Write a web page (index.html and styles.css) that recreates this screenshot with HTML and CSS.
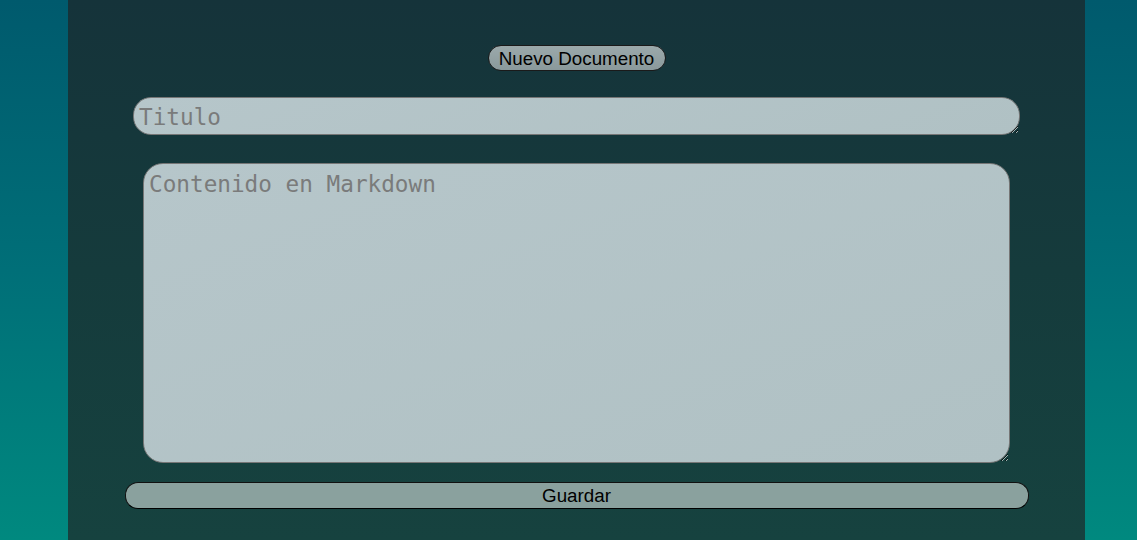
FILE: index.html
```html
<!DOCTYPE html>
<html lang="es">
<head>
<meta charset="utf-8">
<title>Nuevo Documento</title>
<link rel="stylesheet" href="styles.css">
</head>
<body>
<div class="page">
  <main class="panel">
    <button class="new-btn" type="button">Nuevo Documento</button>
    <textarea class="title-input" placeholder="Titulo"></textarea>
    <textarea class="content-input" placeholder="Contenido en Markdown"></textarea>
    <button class="save-btn" type="button">Guardar</button>
  </main>
</div>
</body>
</html>
```

FILE: styles.css
```css
html, body {
  margin: 0;
  height: 100%;
}

body {
  background: linear-gradient(180deg, #005a6d 0%, #006f78 50%, #00897f 100%);
  font-family: "Liberation Sans", Arial, sans-serif;
  overflow: hidden;
}

.page {
  display: flex;
  height: 540px;
  padding-left: 68px;
}

.panel {
  width: 1017px;
  height: 540px;
  box-sizing: border-box;
  background: linear-gradient(180deg, #15333a 0%, #153b3c 50%, #16423f 100%);
  display: flex;
  flex-direction: column;
  align-items: center;
  padding-top: 45px;
}

.new-btn {
  width: 178px;
  height: 26px;
  box-sizing: border-box;
  border: 1px solid #1a1a1a;
  border-radius: 13px;
  background: linear-gradient(180deg, #9ba9ab, #8a999b);
  color: #000;
  font-family: "Liberation Sans", Arial, sans-serif;
  font-size: 18.8px;
  padding: 2px 0 0;
  line-height: 22px;
}

.title-input,
.content-input {
  display: block;
  box-sizing: border-box;
  border: 1px solid #767676;
  background: linear-gradient(160deg, #b6c6ca, #b0c1c4);
  font-family: "DejaVu Sans Mono", "Liberation Mono", monospace;
  font-size: 22.7px;
  color: #333;
  padding: 3px 5px;
  outline: none;
}

.title-input::placeholder,
.content-input::placeholder {
  color: #7a7b7b;
}

.title-input {
  width: 887px;
  height: 38px;
  border-radius: 18px;
  margin-top: 26px;
  line-height: 26px;
  padding-top: 6px;
}

.content-input {
  width: 867px;
  height: 300px;
  border-radius: 20px;
  margin-top: 28px;
  line-height: 26px;
  padding-top: 7px;
}

.save-btn {
  width: 904px;
  height: 27px;
  box-sizing: border-box;
  margin-top: 19px;
  border: 1px solid #111;
  border-bottom-color: #000;
  border-radius: 13px;
  background: #8aa19e;
  color: #000;
  font-family: "Liberation Sans", Arial, sans-serif;
  font-size: 18.8px;
  padding: 1px 0 0;
  line-height: 22px;
}
```
